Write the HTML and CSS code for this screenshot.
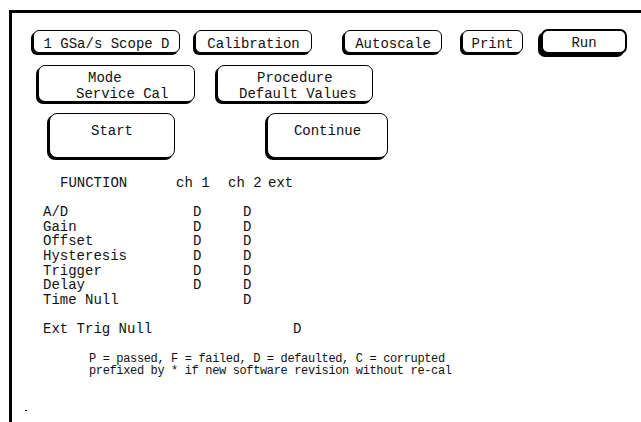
FILE: index.html
```html
<!DOCTYPE html>
<html>
<head>
    <title>Calibration</title>
    <meta http-equiv="Content-Type" content="text/html;charset=utf-8"/>
    <link rel="stylesheet" href="styles.css">
</head>
<body>
<div id="screen">
    <div class="toprow">
        <div class="key" id="scopekey">1 GSa/s Scope D</div>
        <div class="key" id="calkey">Calibration</div>
        <div class="key" id="autokey">Autoscale</div>
        <div class="key" id="printkey">Print</div>
        <div class="key" id="runkey">Run</div>
    </div>
    <div class="fieldrow">
        <div class="key field" id="modekey">
            <span class="line" id="modelabel">Mode</span>
            <span class="line" id="modevalue">Service Cal</span>
        </div>
        <div class="key field" id="prockey">
            <span class="line" id="proclabel">Procedure</span>
            <span class="line" id="procvalue">Default Values</span>
        </div>
    </div>
    <div class="actionrow">
        <div class="key action" id="startkey">Start</div>
        <div class="key action" id="contkey">Continue</div>
    </div>
    <div id="results">
        <div class="headrow">
            <span class="hfunc">FUNCTION</span>
            <span class="hch1">ch 1</span>
            <span class="hch2">ch 2</span>
            <span>ext</span>
        </div>
        <div class="blank"></div>
        <div class="row"><span>A/D</span><span>D</span><span>D</span><span></span></div>
        <div class="row"><span>Gain</span><span>D</span><span>D</span><span></span></div>
        <div class="row"><span>Offset</span><span>D</span><span>D</span><span></span></div>
        <div class="row"><span>Hysteresis</span><span>D</span><span>D</span><span></span></div>
        <div class="row"><span>Trigger</span><span>D</span><span>D</span><span></span></div>
        <div class="row"><span>Delay</span><span>D</span><span>D</span><span></span></div>
        <div class="row"><span>Time Null</span><span></span><span>D</span><span></span></div>
        <div class="blank"></div>
        <div class="row"><span>Ext Trig Null</span><span></span><span></span><span>D</span></div>
    </div>
    <div id="legend">
        <div>P = passed, F = failed, D = defaulted, C = corrupted</div>
        <div>prefixed by * if new software revision without re-cal</div>
    </div>
    <div id="cursor"></div>
</div>
</body>
</html>
```

FILE: styles.css
```css
html, body {
    overflow: hidden;
}
body {
    margin: 0;
    background-color: #fff;
    color: #111;
    font-family: "Liberation Mono", "DejaVu Sans Mono", monospace;
    font-size: 14px;
}
#screen {
    box-sizing: border-box;
    height: 412px;
    margin: 10px 0 0 9px;
    border-top: 3px solid #000;
    border-left: 3px solid #000;
}

/* softkeys */
.key {
    box-sizing: border-box;
    background-color: #fff;
    border: 1px solid #000;
    border-radius: 6px;
    box-shadow: -2px 2px 0 #000;
    line-height: 16px;
    white-space: nowrap;
}
.toprow {
    display: flex;
    align-items: flex-start;
    height: 23px;
    margin-top: 17px;
    padding-left: 21px;
}
.toprow .key {
    height: 23px;
    padding-top: 5px;
    text-align: center;
}
#scopekey {
    width: 147px;
}
#calkey {
    width: 117px;
    margin-left: 15px;
}
#autokey {
    width: 98px;
    margin-left: 32px;
}
#printkey {
    width: 61px;
    margin-left: 20px;
}
.toprow #runkey {
    width: 86px;
    height: 25px;
    margin-left: 18px;
    margin-top: -1px;
    padding-top: 4px;
    border-width: 2px;
    border-radius: 7px;
    box-shadow: -3px 3px 0 #000;
}

.fieldrow {
    display: flex;
    margin-top: 12px;
    padding-left: 26px;
}
.field {
    height: 37px;
    padding-top: 4px;
    border-radius: 7px;
}
.field .line {
    display: block;
}
#modekey {
    width: 157px;
}
#prockey {
    width: 156px;
    margin-left: 22px;
}
#modelabel {
    padding-left: 49px;
}
#modevalue {
    padding-left: 37px;
}
#proclabel {
    padding-left: 39px;
}
#procvalue {
    padding-left: 21px;
}

.actionrow {
    display: flex;
    margin-top: 11px;
    padding-left: 37px;
}
.action {
    height: 45px;
    padding-top: 9px;
    text-align: center;
    border-radius: 8px;
}
#startkey {
    width: 126px;
}
#contkey {
    width: 121px;
    margin-left: 92px;
}

/* calibration status table */
#results {
    margin-top: 18px;
    line-height: 14.6px;
    white-space: nowrap;
}
.headrow {
    display: flex;
    padding-left: 48px;
}
.hfunc {
    width: 116px;
}
.hch1 {
    width: 52px;
}
.hch2 {
    width: 40px;
}
.blank {
    height: 14.6px;
}
.row {
    display: grid;
    grid-template-columns: 150px 50px 50px auto;
    padding-left: 31px;
}

#legend {
    margin-top: 16px;
    padding-left: 77px;
    font-size: 12px;
    line-height: 12.8px;
    letter-spacing: -0.36px;
    white-space: nowrap;
}
#cursor {
    width: 2px;
    height: 1px;
    margin: 32px 0 0 13px;
    background-color: #000;
}
```
